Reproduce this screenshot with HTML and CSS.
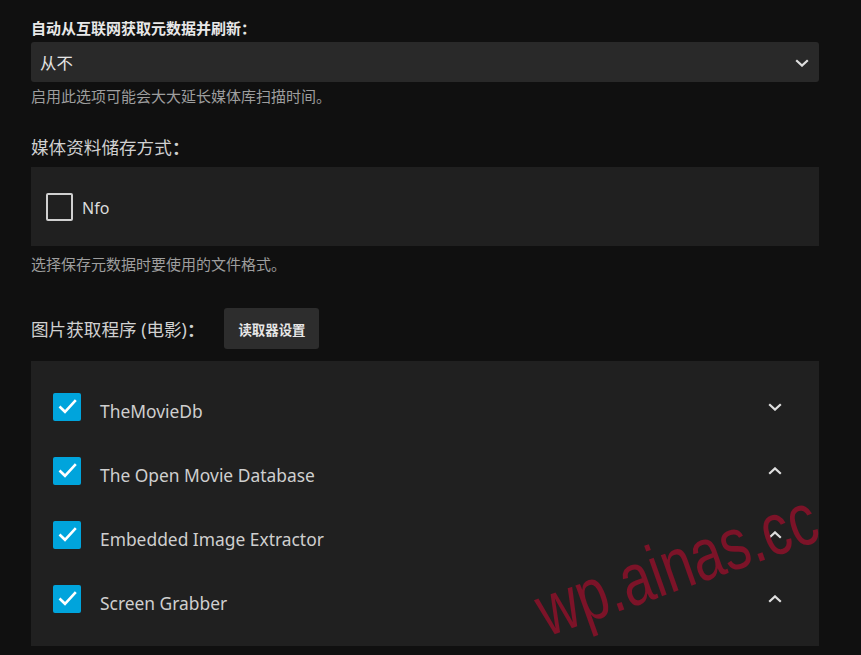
FILE: index.html
```html
<!DOCTYPE html>
<html lang="zh-CN">
<head>
    <meta charset="UTF-8">
    <meta name="viewport" content="width=device-width, initial-scale=1.0">
    <title>媒体库设置</title>
    <link rel="stylesheet" href="styles.css">
</head>
<body>
    <div class="page">
        <label class="select-label">自动从互联网获取元数据并刷新<span class="colon">：</span></label>
        <div class="select">
            <span>从不</span>
            <svg class="chevron" width="14" height="8" viewBox="0 0 14 8"><polyline points="1.2,1.2 7,6.6 12.8,1.2"/></svg>
        </div>
        <div class="field-desc">启用此选项可能会大大延长媒体库扫描时间。</div>

        <h3 class="section-title">媒体资料储存方式<span class="colon">：</span></h3>
        <div class="paper-list single">
            <label class="check-row">
                <span class="check-box"></span>
                <span class="check-text">Nfo</span>
            </label>
        </div>
        <div class="field-desc">选择保存元数据时要使用的文件格式。</div>

        <div class="title-row">
            <h3 class="section-title">图片获取程序 (电影)<span class="colon">：</span></h3>
            <button class="raised">读取器设置</button>
        </div>
        <div class="paper-list">
            <div class="fetcher-row">
                <span class="check-box checked"><svg width="28" height="28" viewBox="0 0 28 28"><polyline points="6.5,13.5 12,18.8 22.8,7.2"/></svg></span>
                <span class="fetcher-name">TheMovieDb</span>
                <svg class="chevron" width="14" height="8" viewBox="0 0 14 8"><polyline points="1.2,1.2 7,6.6 12.8,1.2"/></svg>
            </div>
            <div class="fetcher-row">
                <span class="check-box checked"><svg width="28" height="28" viewBox="0 0 28 28"><polyline points="6.5,13.5 12,18.8 22.8,7.2"/></svg></span>
                <span class="fetcher-name">The Open Movie Database</span>
                <svg class="chevron" width="14" height="8" viewBox="0 0 14 8"><polyline points="1.2,6.8 7,1.4 12.8,6.8"/></svg>
            </div>
            <div class="fetcher-row">
                <span class="check-box checked"><svg width="28" height="28" viewBox="0 0 28 28"><polyline points="6.5,13.5 12,18.8 22.8,7.2"/></svg></span>
                <span class="fetcher-name">Embedded Image Extractor</span>
                <svg class="chevron" width="14" height="8" viewBox="0 0 14 8"><polyline points="1.2,6.8 7,1.4 12.8,6.8"/></svg>
            </div>
            <div class="fetcher-row">
                <span class="check-box checked"><svg width="28" height="28" viewBox="0 0 28 28"><polyline points="6.5,13.5 12,18.8 22.8,7.2"/></svg></span>
                <span class="fetcher-name">Screen Grabber</span>
                <svg class="chevron" width="14" height="8" viewBox="0 0 14 8"><polyline points="1.2,6.8 7,1.4 12.8,6.8"/></svg>
            </div>
        </div>
    </div>

    <div class="watermark">wp.ainas.cc</div>
</body>
</html>
```

FILE: styles.css
```css
html, body {
    margin: 0;
    padding: 0;
    background: #101010;
    overflow: hidden;
}
body {
    font-family: "Noto Sans", "Noto Sans CJK SC", sans-serif;
    color: rgba(255,255,255,0.87);
    height: 655px;
    position: relative;
}
.page {
    width: 788px;
    margin-left: 31px;
    padding-top: 18px;
}
.colon {
    display: inline-block;
    width: 1em;
    text-align: center;
    font-family: "Noto Sans", sans-serif;
    font-weight: 700;
}
.select-label {
    display: block;
    font-size: 15px;
    line-height: 20px;
    font-weight: 600;
    color: #e8e8e8;
    margin-bottom: 4px;
}
.select {
    height: 40px;
    background: #292929;
    border-radius: 3px;
    display: flex;
    align-items: center;
    justify-content: space-between;
    padding: 0 10px 0 9px;
    font-size: 16.4px;
    color: #e4e4e4;
}
.chevron {
    fill: none;
    stroke: #dedede;
    stroke-width: 2.2;
}
.select .chevron {
    margin-top: 2px;
}
.field-desc {
    font-size: 15px;
    line-height: 20px;
    color: #9e9e9e;
    margin-top: 4px;
}
.section-title {
    font-size: 17.6px;
    line-height: 24px;
    font-weight: 400;
    color: #d0d0d0;
    margin: 29px 0 8px 0;
}
.paper-list {
    background: #202020;
}
.paper-list.single {
    height: 79px;
    display: flex;
    align-items: center;
    padding-left: 15px;
}
.paper-list.single + .field-desc {
    margin-top: 8px;
}
.check-row {
    display: flex;
    align-items: center;
}
.check-box {
    box-sizing: border-box;
    width: 27px;
    height: 28px;
    border: 2px solid #d0d0d0;
    border-radius: 2px;
    flex-shrink: 0;
}
.check-text {
    font-size: 16px;
    color: #dcdcdc;
    margin-left: 9px;
    margin-top: 2px;
}
.title-row {
    display: flex;
    align-items: center;
    margin-top: 34px;
    margin-bottom: 12px;
}
.title-row .section-title {
    margin: 0;
}
.raised {
    margin-left: 20px;
    height: 41px;
    padding: 0 14px;
    background: #2d2d2d;
    border: none;
    border-radius: 3px;
    color: #e6e6e6;
    font-family: "Noto Sans", "Noto Sans CJK SC", sans-serif;
    font-size: 13.4px;
    font-weight: 700;
}
.paper-list:not(.single) {
    padding: 14px 0 15px 0;
}
.fetcher-row {
    height: 64px;
    display: flex;
    align-items: center;
    padding: 0 37px 0 22px;
}
.check-box.checked {
    width: 28px;
    height: 28px;
    border: none;
    background: #00a4dc;
}
.check-box.checked svg {
    display: block;
    fill: none;
    stroke: #ffffff;
    stroke-width: 2.6;
}
.fetcher-name {
    flex: 1;
    font-size: 17.4px;
    color: #cfcfcf;
    margin-left: 19px;
    margin-top: 8px;
}
.watermark {
    position: absolute;
    left: 547px;
    top: 590px;
    font-family: "Liberation Sans", Arial, sans-serif;
    font-size: 56px;
    line-height: 1;
    color: #7c1328;
    white-space: nowrap;
    transform-origin: 0 47px;
    transform: rotate(-19.5deg) scaleY(1.32);
    pointer-events: none;
}
```
